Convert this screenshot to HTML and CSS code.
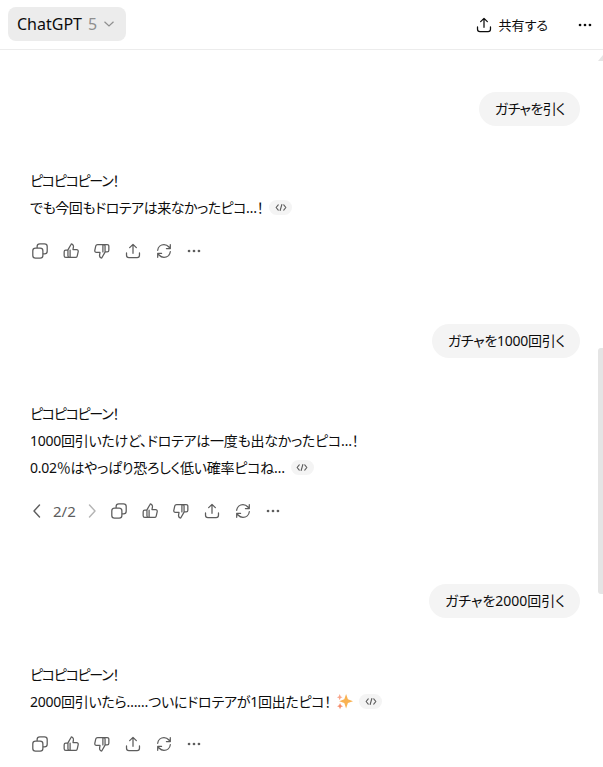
FILE: index.html
```html
<!DOCTYPE html>
<html lang="ja">
<head>
    <meta charset="UTF-8">
    <meta name="viewport" content="width=device-width, initial-scale=1.0">
    <title>ChatGPT</title>
    <link rel="stylesheet" href="styles.css">
</head>
<body>
    <svg class="sprites" width="0" height="0">
        <symbol id="i-copy" viewBox="0 0 20 20"><rect x="6.8" y="2" width="11.2" height="11.2" rx="3"/><rect x="2" y="6.8" width="11.2" height="11.2" rx="3" fill="#fff"/></symbol>
        <symbol id="i-up" viewBox="0 0 20 20"><path d="M6.600 8.800V15.400c0 1 .8 1.800 1.800 1.800h6.400c1.100 0 1.900-.6 2.100-1.600l1.100-5c.2-1.200-.6-2.200-1.800-2.200h-4l.5-2.900c.2-1.400-.5-2.700-1.600-3.200-.5-.2-.9 0-1.100.5zM6.600 9H4.200c-1 0-1.800.8-1.800 1.800v4.600c0 1 .8 1.800 1.800 1.800h4.200M9 9v8.200"/></symbol>
        <symbol id="i-down" viewBox="0 0 20 20"><path d="M13.400 11.200V4.600c0-1-.8-1.800-1.800-1.800H5.200c-1.100 0-1.900.6-2.100 1.600L2 9.400C1.800 10.600 2.600 11.600 3.800 11.600h4l-.5 2.900c-.2 1.400.5 2.700 1.600 3.200.5.200.9 0 1.100-.5zM13.400 11h2.400c1 0 1.800-.8 1.800-1.800V4.600c0-1-.8-1.800-1.800-1.800h-4.200M11 11V2.800"/></symbol>
        <symbol id="i-share" viewBox="0 0 20 20"><path d="M10 12.600V2.800M6.300 6.300 10 2.600l3.700 3.700M2.800 12.200v2.600c0 1.500 1.100 2.600 2.600 2.600h9.200c1.500 0 2.600-1.100 2.600-2.600v-2.600"/></symbol>
        <symbol id="i-retry" viewBox="0 0 20 20"><path d="M3 9.200C3.400 5.500 6.400 3 10 3c2.300 0 4 .9 5.500 2.600l1.500 1.700M17 3v4.300h-4.300M17 10.800C16.600 14.500 13.600 17 10 17c-2.300 0-4-.9-5.500-2.600L3 12.700M3 17v-4.300h4.300"/></symbol>
        <symbol id="i-more" viewBox="0 0 20 20"><circle cx="4.500" cy="10" r="1.500"/><circle cx="10" cy="10" r="1.500"/><circle cx="15.500" cy="10" r="1.500"/></symbol>
        <symbol id="i-code" viewBox="0 0 14 10"><path d="M3.800 2 1.300 5l2.500 3M10.200 2l2.500 3-2.500 3M8 1.500 6 8.500"/></symbol>
    </svg>

    <header class="topbar">
        <button class="model-btn">
            <span>ChatGPT</span>
            <span class="model-ver">5</span>
            <svg class="chevron" viewBox="0 0 12 8"><path d="M1.500 1.800 6 6l4.500-4.200"/></svg>
        </button>
        <div class="topbar-right">
            <button class="share-btn">
                <svg class="icon dark"><use href="#i-share"/></svg>
                <span>共有する</span>
            </button>
            <button class="more-btn"><svg class="icon solid-dark"><use href="#i-more"/></svg></button>
        </div>
    </header>

    <main class="thread">
        <section class="turn turn-1">
            <div class="user-row"><div class="bubble">ガチャを引く</div></div>
            <div class="reply">
                <p>ピコピコピーン！</p>
                <p>でも今回もドロテアは来なかったピコ…！<span class="code-chip"><svg viewBox="0 0 14 10"><use href="#i-code"/></svg></span></p>
            </div>
            <div class="actions">
                <svg class="icon"><use href="#i-copy"/></svg>
                <svg class="icon"><use href="#i-up"/></svg>
                <svg class="icon"><use href="#i-down"/></svg>
                <svg class="icon"><use href="#i-share"/></svg>
                <svg class="icon"><use href="#i-retry"/></svg>
                <svg class="icon solid"><use href="#i-more"/></svg>
            </div>
        </section>

        <section class="turn turn-2">
            <div class="user-row"><div class="bubble">ガチャを1000回引く</div></div>
            <div class="reply">
                <p>ピコピコピーン！</p>
                <p>1000回引いたけど、ドロテアは一度も出なかったピコ…！</p>
                <p>0.02％はやっぱり恐ろしく低い確率ピコね…<span class="code-chip"><svg viewBox="0 0 14 10"><use href="#i-code"/></svg></span></p>
            </div>
            <div class="actions">
                <div class="pager">
                    <svg class="pager-arrow" viewBox="0 0 10 16"><path d="M7.500 2 2 8l5.500 6"/></svg>
                    <span>2/2</span>
                    <svg class="pager-arrow off" viewBox="0 0 10 16"><path d="M2.500 2 8 8l-5.500 6"/></svg>
                </div>
                <svg class="icon"><use href="#i-copy"/></svg>
                <svg class="icon"><use href="#i-up"/></svg>
                <svg class="icon"><use href="#i-down"/></svg>
                <svg class="icon"><use href="#i-share"/></svg>
                <svg class="icon"><use href="#i-retry"/></svg>
                <svg class="icon solid"><use href="#i-more"/></svg>
            </div>
        </section>

        <section class="turn turn-3">
            <div class="user-row"><div class="bubble">ガチャを2000回引く</div></div>
            <div class="reply">
                <p>ピコピコピーン！</p>
                <p>2000回引いたら……ついにドロテアが1回出たピコ！<svg class="sparkles" viewBox="0 0 16 16"><path d="M9.500 1 11.200 5.800 16 7.700 11.200 9.500 9.500 14.500 7.800 9.500 3 7.700 7.800 5.800z" fill="#f9b252"/><path d="M3.500 1 4.400 3.200 6.200 4l-1.800.8-.9 2-.9-2L.8 4l1.800-.8z" fill="#f8a58a"/><path d="M3.800 9.500l.9 2.100 1.900.8-1.900.7-.9 2.200-.9-2.200-1.900-.7 1.900-.8z" fill="#f58d6c"/></svg><span class="code-chip"><svg viewBox="0 0 14 10"><use href="#i-code"/></svg></span></p>
            </div>
            <div class="actions">
                <svg class="icon"><use href="#i-copy"/></svg>
                <svg class="icon"><use href="#i-up"/></svg>
                <svg class="icon"><use href="#i-down"/></svg>
                <svg class="icon"><use href="#i-share"/></svg>
                <svg class="icon"><use href="#i-retry"/></svg>
                <svg class="icon solid"><use href="#i-more"/></svg>
            </div>
        </section>
    </main>

    <div class="scroll-arrow"></div>
    <div class="scroll-thumb"></div>
</body>
</html>
```

FILE: styles.css
```css
html, body {
    height: 100%;
}

body {
    margin: 0;
    background: #fff;
    color: #0d0d0d;
    font-family: "Noto Sans", "Noto Sans CJK JP", sans-serif;
    font-size: 14px;
    font-feature-settings: "palt";
    overflow: hidden;
    position: relative;
}

button {
    font: inherit;
    color: inherit;
    background: none;
    border: none;
    padding: 0;
}

.sprites {
    position: absolute;
}

.topbar {
    height: 49px;
    border-bottom: 1px solid #ececec;
    display: flex;
    align-items: center;
    justify-content: space-between;
    padding: 0 8px;
}

.model-btn {
    display: flex;
    align-items: center;
    height: 34px;
    margin-top: -1px;
    padding: 0 11px 0 9px;
    background: #ececec;
    border-radius: 8px;
    font-size: 16px;
}

.model-ver {
    color: #8f8f8f;
    margin-left: 6px;
}

.chevron {
    width: 12px;
    height: 8px;
    margin-left: 6px;
    fill: none;
    stroke: #8f8f8f;
    stroke-width: 1.200;
}

.topbar-right {
    display: flex;
    align-items: center;
}

.share-btn {
    display: flex;
    align-items: center;
    gap: 6px;
    font-size: 13px;
}

.more-btn {
    display: flex;
    margin: 0 1px 0 28px;
}

.icon {
    width: 18px;
    height: 18px;
    fill: none;
    stroke: #5d5d5d;
    stroke-width: 1.400;
    stroke-linejoin: round;
    stroke-linecap: round;
}

.icon.dark {
    stroke: #0d0d0d;
}

.icon.solid {
    fill: #5d5d5d;
    stroke: none;
    margin-left: -1px;
}

.icon.solid-dark {
    fill: #0d0d0d;
    stroke: none;
}

.turn {
    padding: 0 23px 0 30px;
}

.turn-1 {
    padding-top: 42px;
}

.turn-2 {
    padding-top: 64px;
}

.turn-3 {
    padding-top: 64px;
}

.user-row {
    display: flex;
    justify-content: flex-end;
}

.bubble {
    height: 34px;
    line-height: 34px;
    padding: 0 15px 0 16px;
    background: #f4f4f4;
    border-radius: 17px;
    font-size: 14px;
    white-space: nowrap;
}

.turn-1 .bubble {
    letter-spacing: -0.650px;
}

.turn-2 .bubble {
    letter-spacing: -0.250px;
}

.reply {
    margin-top: 41px;
}

.turn-2 .reply {
    margin-top: 42px;
}

.turn-3 .reply {
    margin-top: 43px;
}

.reply p {
    margin: 0;
    height: 27px;
    line-height: 27px;
    display: flex;
    align-items: center;
    white-space: nowrap;
    letter-spacing: -0.250px;
}

/* the kana lines run narrower than the kanji ones */
.reply p:first-child {
    letter-spacing: -1.250px;
}

.turn-1 .reply p:nth-child(2) {
    letter-spacing: -0.470px;
}

.code-chip {
    display: inline-flex;
    align-items: center;
    justify-content: center;
    width: 23px;
    height: 15px;
    margin-left: 6px;
    background: #f4f4f4;
    border-radius: 8px;
}

.code-chip svg {
    width: 12px;
    height: 9px;
    fill: none;
    stroke: #5d5d5d;
    stroke-width: 1.300;
    stroke-linecap: round;
    stroke-linejoin: round;
}

.sparkles {
    width: 17px;
    height: 17px;
    margin-left: 5px;
}

.actions {
    display: flex;
    align-items: center;
    gap: 13px;
    height: 18px;
    margin-top: 21px;
    margin-left: 1px;
}

.turn-3 .actions {
    margin-top: 20px;
}

.pager {
    display: flex;
    align-items: center;
    gap: 11px;
    color: #5d5d5d;
    font-size: 15px;
    margin-left: 1px;
}

.pager-arrow {
    width: 10px;
    height: 16px;
    fill: none;
    stroke: #5d5d5d;
    stroke-width: 1.400;
    stroke-linecap: round;
    stroke-linejoin: round;
}

.pager-arrow.off {
    stroke: #b4b4b4;
}

/* scrollbar of the thread, lies over the content */
.scroll-thumb {
    position: absolute;
    right: 0;
    top: 348px;
    width: 5px;
    height: 246px;
    background: #e5e5e5;
    border-radius: 3px 0 0 3px;
}

.scroll-arrow {
    position: absolute;
    right: 0;
    top: 55px;
    width: 0;
    height: 0;
    border-left: 5px solid transparent;
    border-bottom: 6px solid #e5e5e5;
}
```
